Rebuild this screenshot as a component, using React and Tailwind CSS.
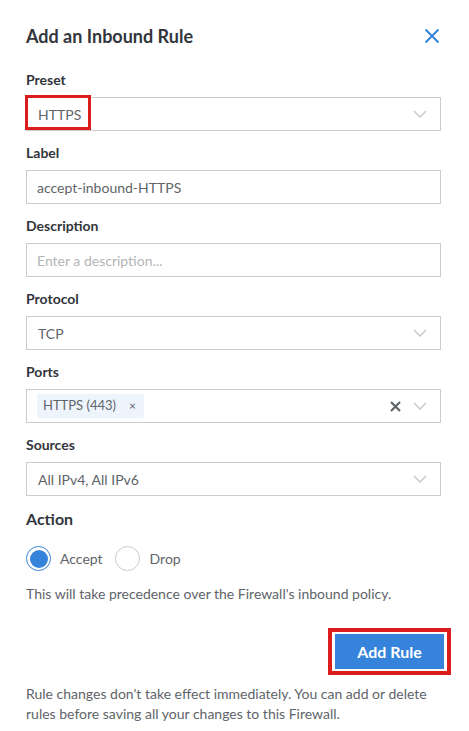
import React, { useState } from "react";

const Chevron = () => (
  <svg width="14" height="8" viewBox="0 0 14 8" fill="none" className="shrink-0">
    <path d="M1 1l6 6 6-6" stroke="#c9cacb" strokeWidth="1.5" />
  </svg>
);

const FieldLabel = ({ children, first }) => (
  <div className={`${first ? "mt-[23px]" : "mt-[13px]"} mb-2 text-[14px] leading-[18px] font-bold text-[#32363c]`}>
    {children}
  </div>
);

const SelectBox = ({ children, extra }) => (
  <div className="relative flex h-[34px] items-center border border-[#ccc] bg-white pl-[11px] pr-[13px]">
    <div className="flex flex-1 items-center text-[14px] text-[#606469]">{children}</div>
    {extra}
    <Chevron />
  </div>
);

export default function App() {
  const [action, setAction] = useState("accept");

  return (
    <div className="min-h-screen bg-white pl-[26px] pr-[28px] pt-[24px] font-['Lato','Liberation_Sans',sans-serif]">
      {/* header */}
      <div className="flex h-[24px] items-center justify-between">
        <h2 className="text-[18px] font-bold text-[#32363c]">Add an Inbound Rule</h2>
        <button className="mr-[-3px] p-1">
          <svg width="16" height="16" viewBox="0 0 16 16">
            <path d="M1.5 1.5l13 13M14.5 1.5l-13 13" stroke="#3683dc" strokeWidth="2" />
          </svg>
        </button>
      </div>

      <FieldLabel first>Preset</FieldLabel>
      <div className="relative">
        <SelectBox>HTTPS</SelectBox>
        <div className="absolute left-[-1px] top-[-2px] h-[35px] w-[66px] border-[3px] border-[#dc1d1d]" />
      </div>

      <FieldLabel>Label</FieldLabel>
      <input
        defaultValue="accept-inbound-HTTPS"
        className="block h-[34px] w-full border border-[#ccc] px-[10px] text-[14px] text-[#606469] outline-none"
      />

      <FieldLabel>Description</FieldLabel>
      <input
        placeholder="Enter a description..."
        className="block h-[34px] w-full border border-[#ccc] px-[10px] text-[14px] text-[#606469] outline-none placeholder:text-[#b4b6b8]"
      />

      <FieldLabel>Protocol</FieldLabel>
      <SelectBox>TCP</SelectBox>

      <FieldLabel>Ports</FieldLabel>
      <div className="relative flex h-[34px] items-center border border-[#ccc] bg-white pl-[10px] pr-[13px]">
        <div className="flex flex-1 items-center">
          <span className="flex h-[24px] items-center gap-[13px] rounded-[3px] bg-[#eef4fc] pl-[6px] pr-[8px] text-[13px] text-[#606469]">
            HTTPS (443)
            <span className="text-[12px] leading-none">×</span>
          </span>
        </div>
        <svg width="11" height="11" viewBox="0 0 11 11" className="mr-[12px]">
          <path d="M1 1l9 9M10 1l-9 9" stroke="#606469" strokeWidth="2.2" />
        </svg>
        <Chevron />
      </div>

      <FieldLabel>Sources</FieldLabel>
      <SelectBox>All IPv4, All IPv6</SelectBox>

      <div className="mt-[13px] text-[16px] leading-[20px] font-bold text-[#32363c]">Action</div>

      <div className="mt-[17px] flex h-[25px] items-center text-[14px] text-[#606469]">
        <label className="flex cursor-pointer items-center" onClick={() => setAction("accept")}>
          <span
            className={`flex h-[25px] w-[25px] items-center justify-center rounded-full border ${
              action === "accept" ? "border-[#3683dc]" : "border-[#ccc]"
            }`}
          >
            {action === "accept" && <span className="h-[18px] w-[18px] rounded-full bg-[#3683dc]" />}
          </span>
          <span className="ml-[9px]">Accept</span>
        </label>
        <label className="ml-[12px] flex cursor-pointer items-center" onClick={() => setAction("drop")}>
          <span
            className={`flex h-[25px] w-[25px] items-center justify-center rounded-full border ${
              action === "drop" ? "border-[#3683dc]" : "border-[#ccc]"
            }`}
          >
            {action === "drop" && <span className="h-[18px] w-[18px] rounded-full bg-[#3683dc]" />}
          </span>
          <span className="ml-[10px]">Drop</span>
        </label>
      </div>

      <p className="mt-[13px] text-[14px] leading-[20px] text-[#606469]">
        This will take precedence over the Firewall's inbound policy.
      </p>

      <div className="mt-[24px] flex justify-end">
        <div className="mr-[-10px] border-4 border-[#dc1d1d] px-[3px] py-[2px]">
          <button className="h-[35px] w-[109px] bg-[#3683dc] text-[16px] font-bold text-white">Add Rule</button>
        </div>
      </div>

      <p className="mt-[9px] pb-4 text-[14px] leading-[20px] text-[#606469]">
        Rule changes don't take effect immediately. You can add or delete rules before saving all your changes to this
        Firewall.
      </p>
    </div>
  );
}
